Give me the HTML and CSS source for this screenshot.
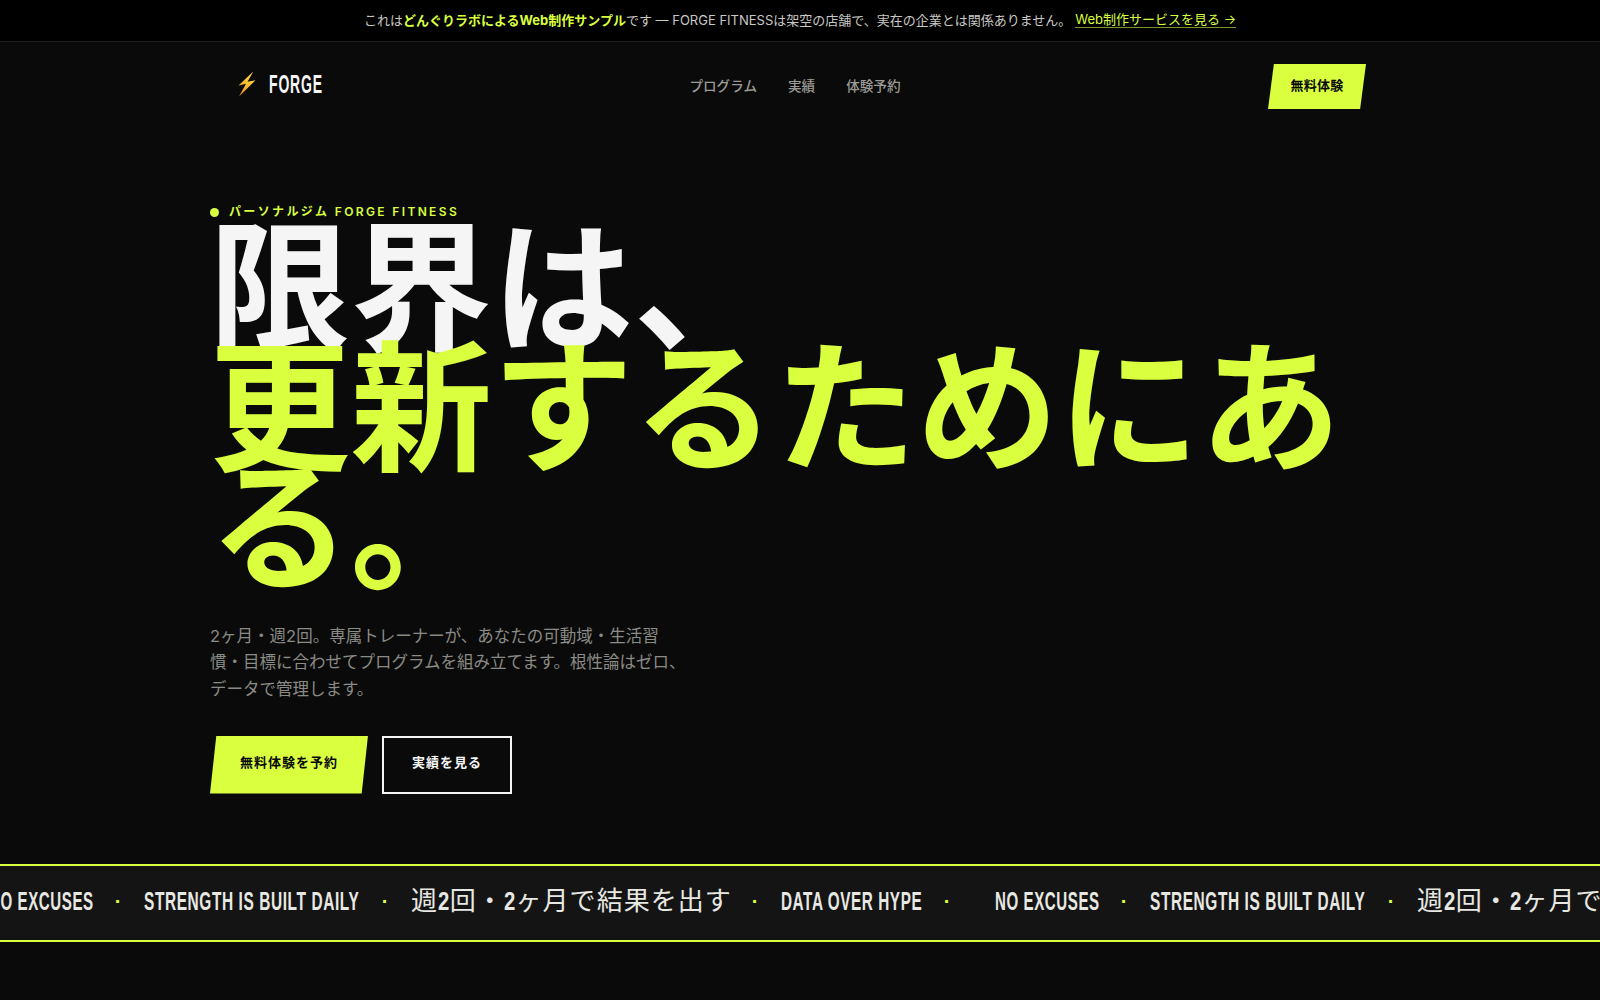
FILE: index.html
```html
<!DOCTYPE html>
<html lang="ja">
<head>
<meta charset="utf-8">
<title>FORGE FITNESS</title>
<link rel="stylesheet" href="styles.css">
</head>
<body>
<div class="notice">
  <span>これは<strong>どんぐりラボによるWeb制作サンプル</strong>です — FORGE FITNESSは架空の店舗で、実在の企業とは関係ありません。</span>
  <a href="#">Web制作サービスを見る →</a>
</div>
<header class="nav">
  <a class="logo" href="#">
    <svg class="bolt" viewBox="0 0 18 26" width="18" height="26" aria-hidden="true">
      <defs><linearGradient id="b" x1="0.8" y1="0" x2="0.2" y2="1"><stop offset="0" stop-color="#ffdf55"/><stop offset="0.55" stop-color="#fdbb2e"/><stop offset="1" stop-color="#ee8a1e"/></linearGradient></defs>
      <path d="M15.3 0.5 L0.5 14.5 L8 12.8 L1 25.5 L17.5 9.2 L9.5 10.8 Z" fill="url(#b)"/>
    </svg>
    <span class="wordmark"><span class="squeeze">FORGE</span></span>
  </a>
  <nav class="links">
    <a href="#">プログラム</a>
    <a href="#">実績</a>
    <a href="#">体験予約</a>
  </nav>
  <a class="cta" href="#">無料体験</a>
</header>
<main class="hero">
  <p class="eyebrow"><i class="dot"></i>パーソナルジム FORGE FITNESS</p>
  <h1><span class="white">限界は、</span><span class="lime">更新するためにある。</span></h1>
  <p class="lead">2ヶ月・週2回。専属トレーナーが、あなたの可動域・生活習慣・目標に合わせてプログラムを組み立てます。根性論はゼロ、データで管理します。</p>
  <div class="actions">
    <a class="btn primary" href="#">無料体験を予約</a>
    <a class="btn ghost" href="#">実績を見る</a>
  </div>
</main>
<section class="marquee">
  <div class="track">
    <span class="item w-no"><span class="squeeze">NO EXCUSES</span></span><i class="sep">·</i>
    <span class="item w-strength"><span class="squeeze">STRENGTH IS BUILT DAILY</span></span><i class="sep">·</i>
    <span class="item cjk">週<b class="digit"><span class="squeeze">2</span></b>回・<b class="digit"><span class="squeeze">2</span></b>ヶ月で結果を出す</span><i class="sep">·</i>
    <span class="item w-data"><span class="squeeze">DATA OVER HYPE</span></span><i class="sep last">·</i>
    <span class="item w-no"><span class="squeeze">NO EXCUSES</span></span><i class="sep">·</i>
    <span class="item w-strength"><span class="squeeze">STRENGTH IS BUILT DAILY</span></span><i class="sep">·</i>
    <span class="item cjk">週<b class="digit"><span class="squeeze">2</span></b>回・<b class="digit"><span class="squeeze">2</span></b>ヶ月で結果を出す</span><i class="sep">·</i>
  </div>
</section>
</body>
</html>
```
FILE: styles.css
```css
* { box-sizing: border-box; }
html, body { margin: 0; height: 100%; overflow: hidden; }
body {
  background: #0a0a0a;
  color: #f5f5f5;
  font-family: Inter, "Noto Sans CJK JP", sans-serif;
}
a { color: inherit; text-decoration: none; }

.notice {
  height: 42px;
  padding-bottom: 2px;
  background: #000;
  border-bottom: 1px solid #1f1f1f;
  display: flex;
  justify-content: center;
  align-items: center;
  gap: 4px;
  font-size: 13px;
  color: #c9c9c4;
}
.notice strong { color: #d9ff3f; font-weight: 700; }
.notice a { color: #d9ff3f; border-bottom: 1px solid #7d9428; line-height: 16px; }

.nav {
  max-width: 1180px;
  margin: 0 auto;
  padding: 22px 24px 0;
  display: flex;
  align-items: center;
  justify-content: space-between;
}
.logo { display: flex; align-items: center; gap: 13px; padding-left: 4px; padding-bottom: 4px; }
.bolt { margin-bottom: 2px; }
.squeeze { display: inline-block; transform-origin: left center; white-space: nowrap; }
.wordmark {
  display: block;
  width: 53px;
  font-family: "Liberation Sans", sans-serif;
  font-size: 25px;
  font-weight: 700;
  letter-spacing: 1.5px;
}
.wordmark .squeeze { transform: scaleX(0.56); }
.links { display: flex; gap: 31px; font-size: 13.6px; font-weight: 500; color: #9a9a96; padding-bottom: 3px; }
.cta {
  width: 98px;
  height: 45px;
  padding-bottom: 4px;
  display: flex;
  align-items: center;
  justify-content: center;
  background: #d9ff3f;
  color: #0a0a0a;
  font-size: 13px;
  font-weight: 700;
  letter-spacing: 0.3px;
  clip-path: polygon(6% 0, 100% 0, 94% 100%, 0 100%);
}

.hero { max-width: 1180px; margin: 0 auto; padding-top: 94px; }
.eyebrow {
  margin: 0;
  display: flex;
  align-items: center;
  gap: 10px;
  font-size: 12px;
  font-weight: 600;
  letter-spacing: 2.35px;
  color: #d9ff3f;
  line-height: 18px;
}
.dot { width: 9px; height: 9px; border-radius: 50%; background: #d9ff3f; }
h1 {
  margin: 8px 0 0 -1px;
  font-size: 141.5px;
  line-height: 119.5px;
  letter-spacing: 0;
  font-weight: 700;
}
h1 span { display: block; }
.white { color: #f5f5f5; }
.lime { color: #d9ff3f; }
.lead {
  margin: 35px 0 0;
  width: 480px;
  font-size: 16.5px;
  line-height: 26.7px;
  color: #8a8a86;
}
.actions { display: flex; gap: 14px; margin-top: 33px; }
.btn {
  height: 58px;
  padding-bottom: 6px;
  display: flex;
  align-items: center;
  justify-content: center;
  font-size: 13px;
  font-weight: 700;
  letter-spacing: 1px;
}
.primary {
  width: 158px;
  background: #d9ff3f;
  color: #0a0a0a;
  clip-path: polygon(4% 0, 100% 0, 96% 100%, 0 100%);
}
.ghost { width: 130px; border: 2px solid #f5f5f5; color: #f5f5f5; }

.marquee {
  margin-top: 70px;
  height: 78px;
  background: #141414;
  border-top: 2px solid #d9ff3f;
  border-bottom: 2px solid #d9ff3f;
  overflow: hidden;
  display: flex;
  align-items: center;
}
.track {
  display: flex;
  align-items: center;
  white-space: nowrap;
  margin-left: -11px;
  margin-bottom: 2px;
  font-family: "Liberation Sans", "Noto Sans CJK JP", sans-serif;
  font-size: 26px;
  font-weight: 700;
  letter-spacing: 1px;
  color: #e8e8e3;
}
.item { display: block; flex: none; }
.w-no { width: 104px; }
.w-no .squeeze { transform: scaleX(0.58); }
.w-strength { width: 216px; }
.w-strength .squeeze { transform: scaleX(0.594); }
.w-data { width: 141px; }
.w-data .squeeze { transform: scaleX(0.5875); }
.cjk {
  width: 319px;
  padding-bottom: 7px;
  font-family: "Noto Sans CJK JP", sans-serif;
  font-weight: 400;
  letter-spacing: 0.04em;
}
.digit { display: inline-block; width: 11.7px; font-family: "Liberation Sans", sans-serif; font-weight: 700; }
.digit .squeeze { transform: scaleX(0.78); }
.sep { flex: none; width: 51px; text-align: center; font-style: normal; font-size: 20px; font-weight: 700; color: #d9ff3f; }
.sep.last { margin-right: 22px; }
```
